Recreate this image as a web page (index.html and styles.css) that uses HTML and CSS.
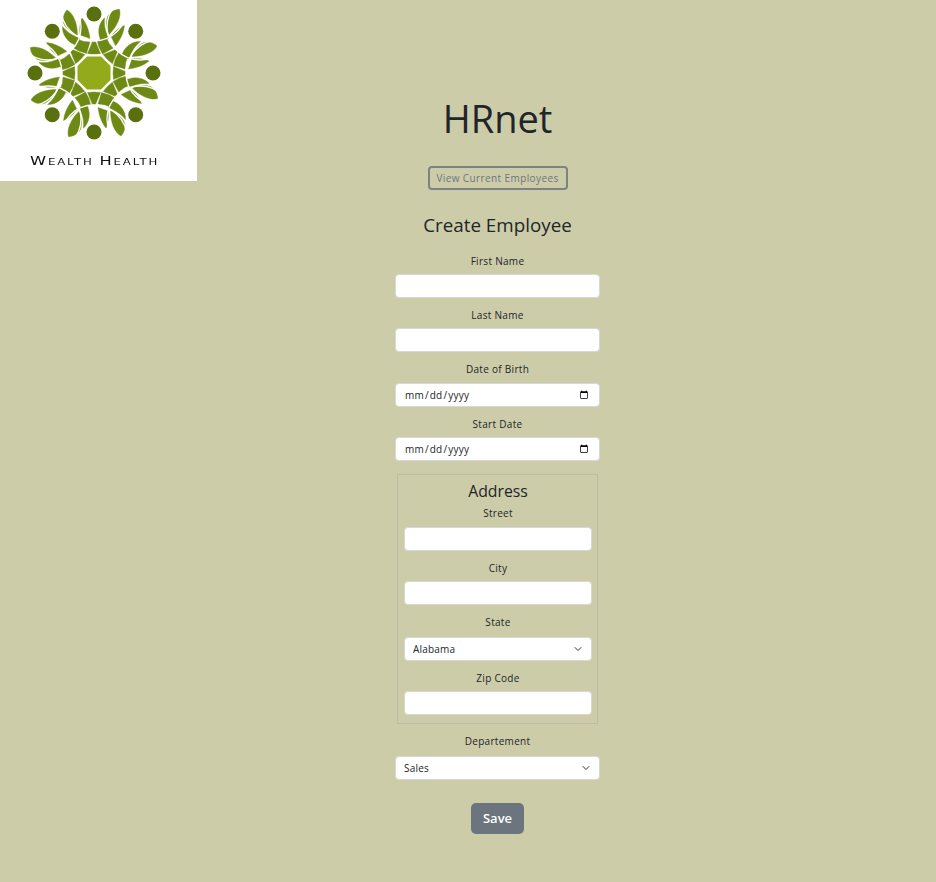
FILE: index.html
```html
<!DOCTYPE html>
<html lang="en">

<head>
    <meta charset="UTF-8">
    <meta name="viewport" content="width=device-width, initial-scale=1.0">
    <title>HRnet</title>
    <link rel="stylesheet" href="styles.css">
</head>

<body>
    <div class="logo">
        <svg class="logo-mark" width="197" height="146" viewBox="-94 -73 197 146">
            <defs>
                <g id="petal">
                    <path d="M-27,-63 C-21,-60 -16.5,-50 -16.5,-38 C-22,-40 -28,-44 -30.5,-50 C-31.5,-55 -30,-60 -27,-63Z" />
                    <path d="M-31.5,-46.5 C-27,-41 -22,-37.5 -14,-35 L-17,-27.5 C-26,-30 -32,-38 -31.5,-46.5Z" />
                    <path d="M-12,-55 C-7,-49 -5,-42 -4,-34.5 L-14,-38 C-14.5,-43 -14.5,-50 -12,-55Z" />
                    <path d="M-16,-33.5 Q-10,-31 -4,-31 L-7.5,-19.5 Q-15,-21 -20.5,-25Z" />
                    <path d="M-1.5,-31.5 L1.5,-31.5 L6.5,-19.5 Q0,-18.5 -6.5,-19.5Z" />
                    <circle class="dot" cx="0" cy="-59" r="7.5" />
                </g>
            </defs>
            <g class="petals">
                <use href="#petal" />
                <use href="#petal" transform="rotate(45)" />
                <use href="#petal" transform="rotate(90)" />
                <use href="#petal" transform="rotate(135)" />
                <use href="#petal" transform="rotate(180)" />
                <use href="#petal" transform="rotate(225)" />
                <use href="#petal" transform="rotate(270)" />
                <use href="#petal" transform="rotate(315)" />
            </g>
            <g class="arcs">
                <circle cx="0" cy="-65" r="33" />
                <circle cx="46" cy="-46" r="33" />
                <circle cx="65" cy="0" r="33" />
                <circle cx="46" cy="46" r="33" />
                <circle cx="0" cy="65" r="33" />
                <circle cx="-46" cy="46" r="33" />
                <circle cx="-65" cy="0" r="33" />
                <circle cx="-46" cy="-46" r="33" />
            </g>
            <polygon class="core" points="-7,-16.5 7,-16.5 16.5,-7 16.5,7 7,16.5 -7,16.5 -16.5,7 -16.5,-7" />
        </svg>
        <div class="logo-name">Wealth Health</div>
    </div>

    <main class="container">
        <h1>HRnet</h1>
        <a class="btn-outline" href="#">View Current Employees</a>
        <h2>Create Employee</h2>

        <form class="employee-form">
            <div class="row">
                <label for="firstName">First Name</label>
                <input type="text" id="firstName">
            </div>
            <div class="row">
                <label for="lastName">Last Name</label>
                <input type="text" id="lastName">
            </div>
            <div class="row">
                <label for="birth">Date of Birth</label>
                <input type="date" id="birth">
            </div>
            <div class="row">
                <label for="start">Start Date</label>
                <input type="date" id="start">
            </div>

            <fieldset class="address">
                <legend>Address</legend>
                <div class="row">
                    <label for="street">Street</label>
                    <input type="text" id="street">
                </div>
                <div class="row">
                    <label for="city">City</label>
                    <input type="text" id="city">
                </div>
                <div class="row">
                    <label for="state">State</label>
                    <select id="state">
                        <option>Alabama</option>
                        <option>Alaska</option>
                    </select>
                </div>
                <div class="row">
                    <label for="zip">Zip Code</label>
                    <input type="text" id="zip">
                </div>
            </fieldset>

            <div class="row">
                <label for="department">Departement</label>
                <select id="department">
                    <option>Sales</option>
                    <option>Marketing</option>
                </select>
            </div>

            <button class="btn-save" type="button">Save</button>
        </form>
    </main>
</body>

</html>
```

FILE: styles.css
```css
body {
    font-family: "Open Sans", "Noto Sans", sans-serif;
    background-color: #cdcca9;
    color: #212529;
    margin: 0;
    padding: 0;
    display: flex;
    align-items: flex-start;
}

.logo {
    flex: none;
    width: 197px;
    height: 181px;
    background-color: #fff;
}

.logo-mark {
    display: block;
    filter: blur(0.35px);
}

.petals {
    fill: #6f8a14;
    stroke: #6f8a14;
    stroke-width: 0.4;
}

.dot {
    fill: #5a6f0e;
    stroke: none;
}

.arcs {
    fill: none;
    stroke: #fff;
    stroke-width: 1.3;
}

.core {
    fill: #93ab1a;
}

.logo-name {
    margin: 6px 0 0 30px;
    font-family: "DejaVu Sans", sans-serif;
    font-size: 12.5px;
    line-height: 17px;
    font-variant: small-caps;
    letter-spacing: 1.45px;
    word-spacing: -1px;
    color: #111;
    white-space: nowrap;
    transform: scaleX(1.3);
    transform-origin: left center;
}

.container {
    flex: 1;
    padding: 94px 138px 48px 0;
    display: flex;
    flex-direction: column;
    align-items: center;
}

h1 {
    font-size: 38px;
    font-weight: 400;
    line-height: 48px;
    margin: 0 0 24px;
}

h2 {
    font-size: 18.8px;
    font-weight: 400;
    line-height: 28px;
    margin: 21px 0 14.6px;
}

.btn-outline {
    box-sizing: border-box;
    width: 140px;
    height: 24px;
    line-height: 20px;
    text-align: center;
    font-size: 10px;
    letter-spacing: 0.4px;
    color: #6c757d;
    text-decoration: none;
    border: 2px solid #7d8283;
    border-radius: 4px;
}

.employee-form {
    width: 205px;
    display: flex;
    flex-direction: column;
    align-items: center;
}

.row {
    width: 100%;
    margin-bottom: 10px;
    display: flex;
    flex-direction: column;
}

label {
    font-size: 10px;
    line-height: 14px;
    letter-spacing: 0.3px;
    margin-bottom: 6.4px;
    text-align: center;
}

input,
select {
    box-sizing: border-box;
    width: 100%;
    height: 24px;
    padding: 0 8px;
    font-family: "Open Sans", "Noto Sans", sans-serif;
    font-size: 10px;
    letter-spacing: 0.2px;
    color: #212529;
    background-color: #fff;
    border: 1px solid #d8d8d4;
    border-radius: 4px;
}

select {
    margin-top: 1.2px;
    appearance: none;
    background-image: url("data:image/svg+xml,%3Csvg xmlns='http://www.w3.org/2000/svg' viewBox='0 0 16 16'%3E%3Cpath fill='none' stroke='%23343a40' stroke-linecap='round' stroke-linejoin='round' stroke-width='2' d='m2 5 6 6 6-6'/%3E%3C/svg%3E");
    background-repeat: no-repeat;
    background-position: right 9px center;
    background-size: 8px 8px;
}

.address {
    box-sizing: border-box;
    width: 201px;
    margin: 2.8px 0 10px;
    padding: 0 5px 0 6px;
    border: 1px solid #bdbda6;
}

.address .row:last-child {
    margin-bottom: 8px;
}

legend {
    float: left;
    width: 100%;
    padding: 0;
    margin: 5px 0 4.4px;
    font-size: 15.8px;
    line-height: 22px;
    text-align: center;
}

legend + .row {
    clear: both;
}

.btn-save {
    width: 53px;
    height: 31px;
    margin-top: 13px;
    padding: 0;
    font-family: "Open Sans", "Noto Sans", sans-serif;
    font-size: 13px;
    font-weight: 600;
    color: #fff;
    background-color: #6c757d;
    border: 0;
    border-radius: 5px;
}
```
